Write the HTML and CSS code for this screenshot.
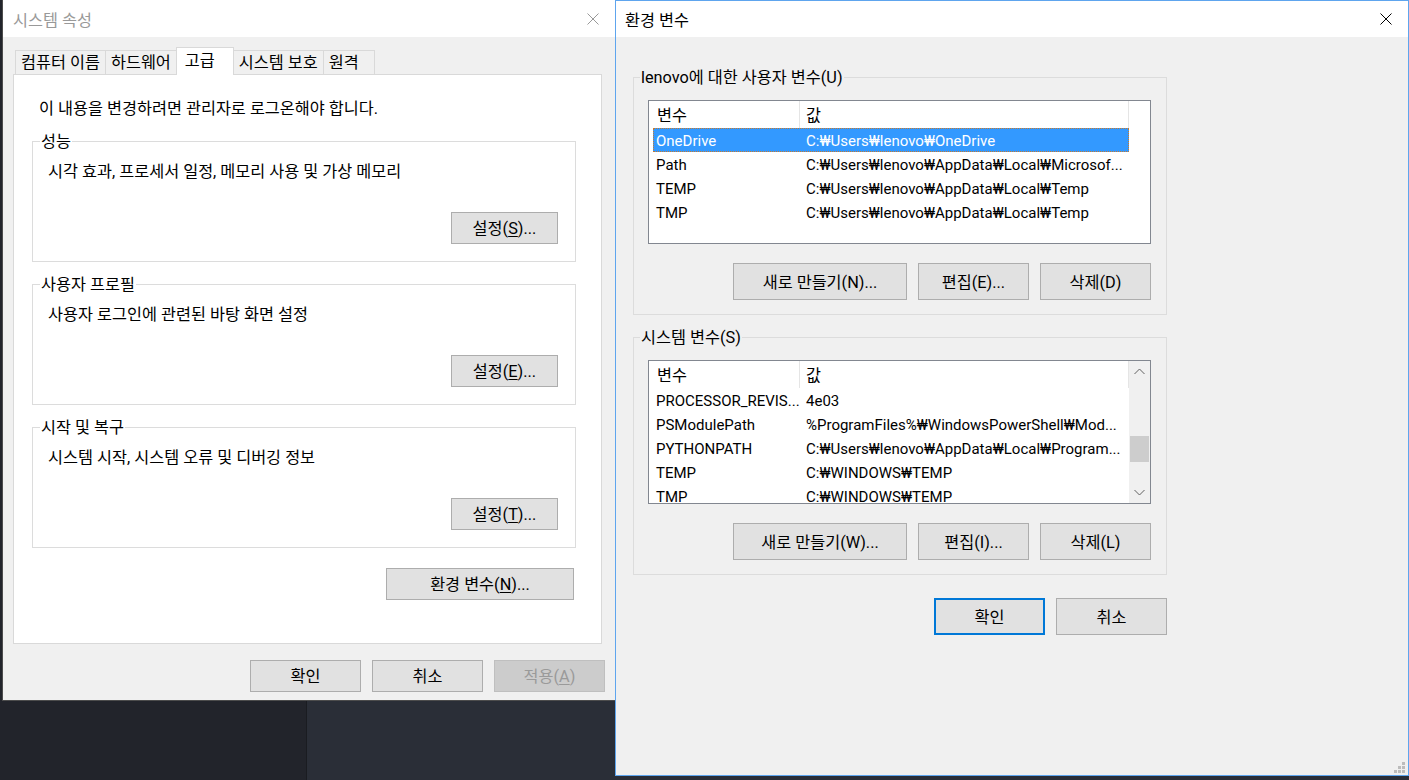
FILE: index.html
```html
<!DOCTYPE html>
<html lang="ko">
<head>
    <meta charset="UTF-8">
    <meta name="viewport" content="width=device-width, initial-scale=1.0">
    <title>시스템 속성 - 환경 변수</title>
    <link rel="stylesheet" href="styles.css">
</head>
<body>
<div class="desktop">

    <!-- 시스템 속성 (inactive) -->
    <div class="window sys-window">
        <div class="titlebar">
            <span class="title">시스템 속성</span>
            <svg class="close" width="12" height="12" viewBox="0 0 12 12"><path d="M0.5 0.5 L11.5 11.5 M11.5 0.5 L0.5 11.5" stroke="#999" stroke-width="1" fill="none"/></svg>
        </div>
        <div class="sys-body">
            <div class="tabs">
                <div class="tab">컴퓨터 이름</div>
                <div class="tab">하드웨어</div>
                <div class="tab active">고급</div>
                <div class="tab">시스템 보호</div>
                <div class="tab">원격</div>
            </div>
            <div class="tab-panel">
                <p class="notice">이 내용을 변경하려면 관리자로 로그온해야 합니다.</p>

                <div class="group">
                    <div class="group-label">성능</div>
                    <p class="group-desc">시각 효과, 프로세서 일정, 메모리 사용 및 가상 메모리</p>
                    <div class="group-actions"><button class="btn btn-set">설정(<u>S</u>)...</button></div>
                </div>

                <div class="group">
                    <div class="group-label">사용자 프로필</div>
                    <p class="group-desc">사용자 로그인에 관련된 바탕 화면 설정</p>
                    <div class="group-actions"><button class="btn btn-set">설정(<u>E</u>)...</button></div>
                </div>

                <div class="group">
                    <div class="group-label">시작 및 복구</div>
                    <p class="group-desc">시스템 시작, 시스템 오류 및 디버깅 정보</p>
                    <div class="group-actions"><button class="btn btn-set">설정(<u>T</u>)...</button></div>
                </div>

                <div class="panel-actions"><button class="btn btn-env">환경 변수(<u>N</u>)...</button></div>
            </div>
            <div class="dialog-actions">
                <button class="btn btn-dlg">확인</button>
                <button class="btn btn-dlg">취소</button>
                <button class="btn btn-dlg" disabled>적용(<u>A</u>)</button>
            </div>
        </div>
    </div>

    <!-- 환경 변수 (active) -->
    <div class="window env-window">
        <div class="titlebar">
            <span class="title">환경 변수</span>
            <svg class="close" width="12" height="12" viewBox="0 0 12 12"><path d="M0.5 0.5 L11.5 11.5 M11.5 0.5 L0.5 11.5" stroke="#000" stroke-width="1" fill="none"/></svg>
        </div>
        <div class="env-body">
            <div class="env-group">
                <div class="group-label">lenovo에 대한 사용자 변수(U)</div>
                <div class="list">
                    <div class="list-cols">
                        <div class="list-head">
                            <div class="head-cell col-name">변수</div>
                            <div class="head-cell col-value">값</div>
                        </div>
                        <div class="row selected"><span class="cell-name">OneDrive</span><span class="cell-value">C:₩Users₩lenovo₩OneDrive</span></div>
                        <div class="row"><span class="cell-name">Path</span><span class="cell-value">C:₩Users₩lenovo₩AppData₩Local₩Microsof...</span></div>
                        <div class="row"><span class="cell-name">TEMP</span><span class="cell-value">C:₩Users₩lenovo₩AppData₩Local₩Temp</span></div>
                        <div class="row"><span class="cell-name">TMP</span><span class="cell-value">C:₩Users₩lenovo₩AppData₩Local₩Temp</span></div>
                    </div>
                </div>
                <div class="list-actions">
                    <button class="btn btn-tall btn-new">새로 만들기(N)...</button>
                    <button class="btn btn-tall btn-dlg">편집(E)...</button>
                    <button class="btn btn-tall btn-dlg">삭제(D)</button>
                </div>
            </div>

            <div class="env-group">
                <div class="group-label">시스템 변수(S)</div>
                <div class="list">
                    <div class="list-cols">
                        <div class="list-head">
                            <div class="head-cell col-name">변수</div>
                            <div class="head-cell col-value">값</div>
                        </div>
                        <div class="row"><span class="cell-name">PROCESSOR_REVIS...</span><span class="cell-value">4e03</span></div>
                        <div class="row"><span class="cell-name">PSModulePath</span><span class="cell-value">%ProgramFiles%₩WindowsPowerShell₩Mod...</span></div>
                        <div class="row"><span class="cell-name">PYTHONPATH</span><span class="cell-value">C:₩Users₩lenovo₩AppData₩Local₩Program...</span></div>
                        <div class="row"><span class="cell-name">TEMP</span><span class="cell-value">C:₩WINDOWS₩TEMP</span></div>
                        <div class="row"><span class="cell-name">TMP</span><span class="cell-value">C:₩WINDOWS₩TEMP</span></div>
                    </div>
                    <div class="scrollbar">
                        <div class="sb-btn"><svg width="11" height="7" viewBox="0 0 11 7"><polyline points="0.5,6 5.5,1 10.5,6" fill="none" stroke="#606060" stroke-width="1"/></svg></div>
                        <div class="sb-track"><div class="sb-thumb"></div></div>
                        <div class="sb-btn"><svg width="11" height="7" viewBox="0 0 11 7"><polyline points="0.5,1 5.5,6 10.5,1" fill="none" stroke="#606060" stroke-width="1"/></svg></div>
                    </div>
                </div>
                <div class="list-actions">
                    <button class="btn btn-tall btn-new">새로 만들기(W)...</button>
                    <button class="btn btn-tall btn-dlg">편집(I)...</button>
                    <button class="btn btn-tall btn-dlg">삭제(L)</button>
                </div>
            </div>

            <div class="env-footer">
                <button class="btn btn-tall btn-dlg btn-default">확인</button>
                <button class="btn btn-tall btn-dlg">취소</button>
            </div>

            <svg class="grip" width="11" height="11" viewBox="0 0 11 11">
                <rect x="8" y="0" width="3" height="3" fill="#bcbcbc"/>
                <rect x="4" y="4" width="3" height="3" fill="#bcbcbc"/>
                <rect x="8" y="4" width="3" height="3" fill="#bcbcbc"/>
                <rect x="0" y="8" width="3" height="3" fill="#bcbcbc"/>
                <rect x="4" y="8" width="3" height="3" fill="#bcbcbc"/>
                <rect x="8" y="8" width="3" height="3" fill="#bcbcbc"/>
            </svg>
        </div>
    </div>

</div>
</body>
</html>
```

FILE: styles.css
```css
/* Global */
* {
    box-sizing: border-box;
}

body {
    margin: 0;
    font-family: Roboto, "Noto Sans", "Noto Sans CJK KR", sans-serif;
    font-size: 16.3px;
    color: #000;
    background-color: #1f2127;
}

.desktop {
    display: flex;
    align-items: flex-start;
    width: 1409px;
    height: 780px;
    overflow: hidden;
    background: linear-gradient(to right, #22242b 0, #22242b 306px, #1a1c21 306px, #1a1c21 307px, #2a2e37 307px);
}

/* Windows */
.window {
    display: flex;
    flex-direction: column;
    background-color: #f0f0f0;
    flex-shrink: 0;
}

.titlebar {
    display: flex;
    align-items: center;
    justify-content: space-between;
    background-color: #fff;
}

.close {
    display: block;
}

.btn {
    font: inherit;
    height: 32px;
    padding: 2px 0 0 0;
    line-height: 20px;
    color: #000;
    background-color: #e1e1e1;
    border: 1px solid #adadad;
}

.btn:disabled {
    background-color: #cccccc;
    border-color: #bfbfbf;
    color: #9a9a9a;
}

.btn u {
    text-underline-offset: 2px;
}

/* 시스템 속성 */
.sys-window {
    width: 613px;
    height: 701px;
    margin-left: 2px;
    border-left: 1px solid #4c4c4c;
    border-bottom: 1px solid #4c4c4c;
}

.sys-window .titlebar {
    height: 38px;
    padding: 0 16px 0 10px;
}

.sys-window .title {
    color: #999;
}

.sys-body {
    flex: 1;
    display: flex;
    flex-direction: column;
    padding: 10px 10px 8px 10px;
}

.tabs {
    display: flex;
    align-items: flex-end;
    height: 27px;
    margin-left: 2px;
}

.tab {
    height: 24px;
    line-height: 24px;
    min-width: 52px;
    padding: 0 5px;
    margin-right: -1px;
    background-color: #f0f0f0;
    border: 1px solid #d9d9d9;
    border-bottom: none;
    white-space: nowrap;
}

.tab.active {
    position: relative;
    z-index: 1;
    height: 28px;
    line-height: 25px;
    min-width: 58px;
    padding-left: 8px;
    margin-bottom: -1px;
    background-color: #fff;
}

.tab-panel {
    margin-right: 3px;
    padding: 24px 25px 43px 18px;
    background-color: #fff;
    border: 1px solid #d9d9d9;
}

.notice {
    margin: 0 0 22px 7px;
    line-height: 20px;
}

.group {
    padding: 0 17px 17px 15px;
    border: 1px solid #dcdcdc;
}

.group + .group {
    margin-top: 22px;
}

.group-label {
    width: fit-content;
    margin: -10px 0 0 -8px;
    padding: 0 1px;
    line-height: 20px;
    background-color: #fff;
    white-space: nowrap;
}

.group-desc {
    margin: 10px 0 0 0;
    line-height: 20px;
}

.group-actions {
    display: flex;
    justify-content: flex-end;
    margin-top: 30px;
}

.btn-set {
    width: 107px;
}

.panel-actions {
    display: flex;
    justify-content: flex-end;
    margin-top: 20px;
    padding-right: 2px;
}

.btn-env {
    width: 188px;
}

.dialog-actions {
    display: flex;
    justify-content: flex-end;
    gap: 11px;
    margin-top: 16px;
}

.btn-dlg {
    width: 111px;
}

/* 환경 변수 */
.env-window {
    width: 794px;
    height: 776px;
    border: 1px solid #5ea5ee;
}

.env-window .titlebar {
    height: 36px;
    padding: 0 16px 0 9px;
}

.env-body {
    flex: 1;
    display: flex;
    flex-direction: column;
    padding: 40px 0 0 17px;
}

.env-group {
    width: 534px;
    padding: 0 15px 14px 14px;
    border: 1px solid #dcdcdc;
}

.env-group + .env-group {
    margin-top: 22px;
}

.env-group .group-label {
    margin-top: -10px;
    background-color: #f0f0f0;
}

.list {
    display: flex;
    height: 144px;
    margin-top: 12px;
    background-color: #fff;
    border: 1px solid #828790;
    overflow: hidden;
}

.list-cols {
    width: 480px;
    overflow: hidden;
}

.list-head {
    display: flex;
    height: 27px;
    line-height: 29px;
}

.head-cell {
    border-right: 1px solid #e5e5e5;
}

.head-cell.col-name {
    width: 151px;
    padding-left: 8px;
}

.head-cell.col-value {
    width: 329px;
    padding-left: 6px;
}

.row {
    display: flex;
    width: 476px;
    height: 24px;
    margin-left: 4px;
    font-size: 15px;
    white-space: nowrap;
}

.row.selected {
    background-color: #3399ff;
    color: #fff;
    outline: 1px dotted #c77a2e;
    outline-offset: -1px;
}

.cell-name {
    width: 147px;
    padding: 2px 0 0 3px;
    line-height: 22px;
    overflow: hidden;
}

.cell-value {
    flex: 1;
    padding: 2px 0 0 6px;
    line-height: 22px;
    overflow: hidden;
}

.scrollbar {
    display: flex;
    flex-direction: column;
    width: 21px;
    background-color: #f0f0f0;
}

.sb-btn {
    display: flex;
    align-items: center;
    justify-content: center;
    height: 21px;
}

.sb-track {
    flex: 1;
}

.sb-thumb {
    height: 26px;
    margin: 54px 1px 0 1px;
    background-color: #cdcdcd;
}

.list-actions {
    display: flex;
    justify-content: flex-end;
    gap: 11px;
    margin-top: 19px;
}

.btn-tall {
    height: 37px;
}

.btn-new {
    width: 174px;
}

.env-footer {
    display: flex;
    justify-content: flex-end;
    gap: 11px;
    width: 534px;
    margin-top: 23px;
}

.btn-default {
    border: 2px solid #0078d7;
}

.grip {
    display: block;
    align-self: flex-end;
    margin: auto 3px 2px 0;
}
```
